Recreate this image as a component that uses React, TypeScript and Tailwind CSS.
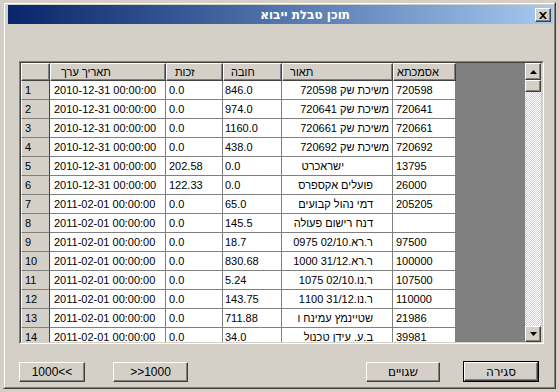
import React from 'react'

type Row = {
  n: number
  date: string
  credit: string
  debit: string
  desc: string
  descPad: number
  ref: string
}

const rows: Row[] = [
  { n: 1, date: '2010-12-31 00:00:00', credit: '0.0', debit: '846.0', desc: 'משיכת שק 720598', descPad: 3, ref: '720598' },
  { n: 2, date: '2010-12-31 00:00:00', credit: '0.0', debit: '974.0', desc: 'משיכת שק 720641', descPad: 3, ref: '720641' },
  { n: 3, date: '2010-12-31 00:00:00', credit: '0.0', debit: '1160.0', desc: 'משיכת שק 720661', descPad: 3, ref: '720661' },
  { n: 4, date: '2010-12-31 00:00:00', credit: '0.0', debit: '438.0', desc: 'משיכת שק 720692', descPad: 3, ref: '720692' },
  { n: 5, date: '2010-12-31 00:00:00', credit: '202.58', debit: '0.0', desc: 'ישראכרט', descPad: 48, ref: '13795' },
  { n: 6, date: '2010-12-31 00:00:00', credit: '122.33', debit: '0.0', desc: 'פועלים אקספרס', descPad: 19, ref: '26000' },
  { n: 7, date: '2011-02-01 00:00:00', credit: '0.0', debit: '65.0', desc: 'דמי נהול קבועים', descPad: 19, ref: '205205' },
  { n: 8, date: '2011-02-01 00:00:00', credit: '0.0', debit: '145.5', desc: 'דנח רישום פעולה', descPad: 19, ref: '' },
  { n: 9, date: '2011-02-01 00:00:00', credit: '0.0', debit: '18.7', desc: 'ר.רא.02/10 0975', descPad: 19, ref: '97500' },
  { n: 10, date: '2011-02-01 00:00:00', credit: '0.0', debit: '830.68', desc: 'ר.רא.31/12 1000', descPad: 19, ref: '100000' },
  { n: 11, date: '2011-02-01 00:00:00', credit: '0.0', debit: '5.24', desc: 'ר.נו.02/10 1075', descPad: 19, ref: '107500' },
  { n: 12, date: '2011-02-01 00:00:00', credit: '0.0', debit: '143.75', desc: 'ר.נו.31/12 1100', descPad: 19, ref: '110000' },
  { n: 13, date: '2011-02-01 00:00:00', credit: '0.0', debit: '711.88', desc: 'שטיינמץ עמינח ו', descPad: 19, ref: '21986' },
  { n: 14, date: '2011-02-01 00:00:00', credit: '0.0', debit: '34.0', desc: 'ב.ע. עידן טכנול', descPad: 19, ref: '39981' },
]

// classic raised 3d edge
const raised =
  'border border-t-white border-l-white border-r-[#404040] border-b-[#404040] shadow-[inset_-1px_-1px_0_#808080]'

function Arrow({ up }: { up?: boolean }) {
  return (
    <svg width="7" height="4" viewBox="0 0 7 4">
      <path d={up ? 'M3.5 0 L7 4 L0 4 Z' : 'M0 0 L7 0 L3.5 4 Z'} fill="#000" />
    </svg>
  )
}

function Button({ label, def, w, heb }: { label: string; def?: boolean; w: string; heb?: boolean }) {
  const inner = (
    <div
      className={`${raised} bg-[#d4d0c8] h-full flex items-center justify-center text-black ${
        heb ? "font-['DejaVu_Sans',sans-serif] text-[12px]" : 'text-[12px]'
      }`}
    >
      <span dir={heb ? 'rtl' : 'ltr'}>{label}</span>
    </div>
  )
  if (def)
    return <div className={`${w} h-[21px] border border-black`}>{inner}</div>
  return <div className={`${w} h-[20px]`}>{inner}</div>
}

export default function App() {
  return (
    <div className="w-[559px] h-[392px] bg-[#d4d0c8] pt-[2px] pl-[3px] font-['Liberation_Sans',Arial,sans-serif]">
      <div className="w-[553px] h-[387px] border border-t-[#d4d0c8] border-l-[#d4d0c8] border-r-[#404040] border-b-[#404040]">
        <div className="h-full border border-t-white border-l-white border-r-[#808080] border-b-[#808080] pl-[3px] pr-[1px] pt-[1px] flex flex-col">
          {/* title bar */}
          <div className="h-[19px] bg-gradient-to-r from-[#0a246a] to-[#a6caf0] flex items-center justify-end pr-[203px] relative">
            <span dir="rtl" className="text-white font-bold text-[12px] leading-none font-['DejaVu_Sans',sans-serif]">
              תוכן טבלת ייבוא
            </span>
            <div className={`absolute right-[2px] top-[3px] w-[16px] h-[14px] bg-[#d4d0c8] ${raised} flex items-center justify-center`}>
              <svg width="8" height="7" viewBox="0 0 8 7">
                <path d="M0 0 L2 0 L4 2 L6 0 L8 0 L5 3.5 L8 7 L6 7 L4 5 L2 7 L0 7 L3 3.5 Z" fill="#000" />
              </svg>
            </div>
          </div>

          {/* table area */}
          <div className="ml-[11px] mt-[37px] w-[525px] h-[283px] border border-t-[#808080] border-l-[#808080] border-r-white border-b-white">
            <div className="h-full border border-t-[#404040] border-l-[#404040] border-r-[#d4d0c8] border-b-[#d4d0c8] flex overflow-hidden">
              <div className="w-[435px] bg-white flex flex-col text-[11px] text-black">
                {/* header */}
                <div className="flex h-[18px] shrink-0">
                  <div className={`w-[29px] bg-[#d4d0c8] ${raised}`} />
                  {[
                    ['תאריך ערך', 'w-[116px]', 'pl-[10px]'],
                    ['זכות', 'w-[57px]', 'pl-[8px]'],
                    ['חובה', 'w-[59px]', 'pl-[7px]'],
                    ['תאור', 'w-[111px]', 'pl-[7px]'],
                    ['אסמכתא', 'w-[63px]', 'pl-[3px]'],
                  ].map(([t, w, p]) => (
                    <div key={t} className={`${w} ${p} bg-[#d4d0c8] ${raised} flex items-center`}>
                      <span dir="rtl">{t}</span>
                    </div>
                  ))}
                </div>
                {rows.map((r) => (
                  <div key={r.n} className="flex h-[19px] shrink-0">
                    <div className="w-[29px] bg-[#d4d0c8] border-l border-l-white border-r border-r-[#404040] border-b border-b-[#808080] pl-[3px] flex items-center">
                      {r.n}
                    </div>
                    <div className="w-[116px] pl-[4px] border-r border-b border-[#808080] flex items-center whitespace-nowrap">
                      {r.date}
                    </div>
                    <div className="w-[57px] pl-[3px] border-r border-b border-[#808080] flex items-center">
                      {r.credit}
                    </div>
                    <div className="w-[59px] pl-[2px] border-r border-b border-[#808080] flex items-center">
                      {r.debit}
                    </div>
                    <div
                      className="w-[111px] border-r border-b border-[#808080] flex items-center justify-end whitespace-nowrap overflow-hidden"
                      style={{ paddingRight: r.descPad }}
                    >
                      <span dir="rtl">{r.desc}</span>
                    </div>
                    <div className="w-[63px] pl-[3px] border-r border-b border-[#808080] flex items-center">
                      {r.ref}
                    </div>
                  </div>
                ))}
              </div>
              <div className="w-[69px] bg-[#808080]" />
              {/* scrollbar */}
              <div className="w-[16px] flex flex-col">
                <div className={`h-[17px] bg-[#d4d0c8] ${raised} flex items-center justify-center`}>
                  <Arrow up />
                </div>
                <div className={`h-[12px] bg-[#d4d0c8] ${raised}`} />
                <div className="flex-1 bg-[repeating-conic-gradient(#ffffff_0_25%,#d4d0c8_0_50%)] bg-[length:2px_2px]" />
                <div className={`h-[16px] bg-[#d4d0c8] ${raised} flex items-center justify-center`}>
                  <Arrow />
                </div>
              </div>
            </div>
          </div>

          {/* buttons */}
          <div className="flex items-center mt-[17px] pl-[11px] pr-[14px]">
            <Button label="1000<<" w="w-[66px]" />
            <div className="ml-[28px]">
              <Button label=">>1000" w="w-[75px]" />
            </div>
            <div className="flex-1" />
            <Button label="שגויים" w="w-[74px]" heb />
            <div className="ml-[23px]">
              <Button label="סגירה" w="w-[76px]" def heb />
            </div>
          </div>
        </div>
      </div>
    </div>
  )
}
